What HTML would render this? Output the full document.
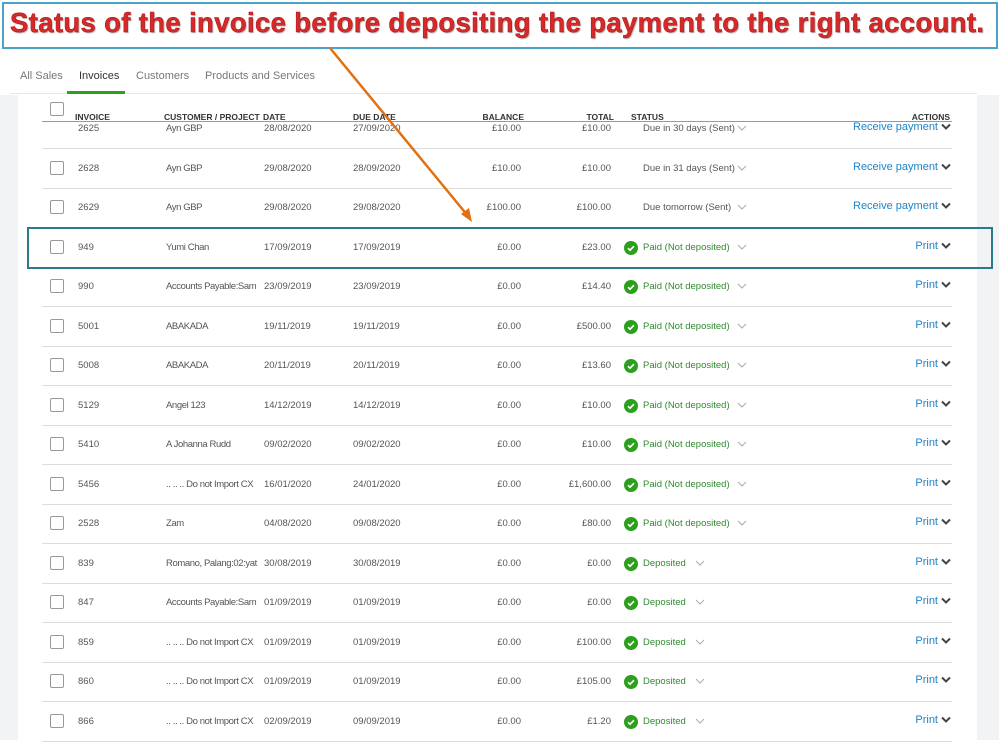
<!DOCTYPE html>
<html><head><meta charset="utf-8"><style>
*{margin:0;padding:0;box-sizing:border-box}
body{width:999px;height:749px;background:#fff;position:relative;overflow:hidden;font-family:"Liberation Sans",sans-serif;color:#555;font-size:9.5px}
.ab{position:absolute;white-space:nowrap}
.banner{left:2px;top:2px;width:996px;height:47px;border:2px solid #4aa3c4;background:#fff}
.btxt{left:10px;top:7px;font-size:27.5px;letter-spacing:0.35px;font-weight:bold;color:#d42a2a;-webkit-text-stroke:0.5px #b01010;text-shadow:0 0 2px #fff,1px 1px 1px #999}
.tab{top:70px;font-size:11px;color:#777}
.cb{position:absolute;left:50px;width:14px;height:14px;border:1px solid #999;border-radius:2px;background:#fff}
.sep{position:absolute;left:42px;width:910px;height:1px;background:#dcdcdc}
.r{text-align:right}
.chk{position:absolute;left:624px;width:14px;height:14px;border-radius:50%;background:#2ca01c}
.st{color:#2f8a2f}
.act{color:#1e84c8;font-size:11px}
.hd{font-weight:bold;color:#333;font-size:8.5px}
</style></head><body>
<div class="ab" style="left:0;top:95px;width:18px;height:645px;background:#f2f3f5"></div>
<div class="ab" style="left:977px;top:95px;width:22px;height:645px;background:#f2f3f5"></div>
<div class="ab" style="left:10px;top:93px;width:967px;height:1px;background:#e6e6e6"></div>
<div class="ab banner"></div>
<div class="ab btxt">Status of the invoice before depositing the payment to the right account.</div>
<div class="ab tab" style="left:20px">All Sales</div>
<div class="ab tab" style="left:79px;color:#333">Invoices</div>
<div class="ab tab" style="left:136px">Customers</div>
<div class="ab tab" style="left:205px">Products and Services</div>
<div class="ab" style="left:67px;top:91px;width:58px;height:3px;background:#2ca01c"></div>

<div class="cb" style="top:102px"></div>
<div class="ab hd" style="left:75px;top:112px">INVOICE</div>
<div class="ab hd" style="left:164px;top:112px">CUSTOMER / PROJECT</div>
<div class="ab hd" style="left:263px;top:112px">DATE</div>
<div class="ab hd" style="left:353px;top:112px">DUE DATE</div>
<div class="ab hd r" style="left:470px;width:54px;top:112px">BALANCE</div>
<div class="ab hd r" style="left:560px;width:54px;top:112px">TOTAL</div>
<div class="ab hd" style="left:631px;top:112px">STATUS</div>
<div class="ab hd r" style="left:880px;width:70px;top:112px">ACTIONS</div>

<div id="rows"></div>
<script>
var d=[
["2625","Ayn GBP","28/08/2020","27/09/2020","£10.00","£10.00","Due in 30 days (Sent)",0],
["2628","Ayn GBP","29/08/2020","28/09/2020","£10.00","£10.00","Due in 31 days (Sent)",0],
["2629","Ayn GBP","29/08/2020","29/08/2020","£100.00","£100.00","Due tomorrow (Sent)",0],
["949","Yumi Chan","17/09/2019","17/09/2019","£0.00","£23.00","Paid (Not deposited)",1],
["990","Accounts Payable:Sam","23/09/2019","23/09/2019","£0.00","£14.40","Paid (Not deposited)",1],
["5001","ABAKADA","19/11/2019","19/11/2019","£0.00","£500.00","Paid (Not deposited)",1],
["5008","ABAKADA","20/11/2019","20/11/2019","£0.00","£13.60","Paid (Not deposited)",1],
["5129","Angel 123","14/12/2019","14/12/2019","£0.00","£10.00","Paid (Not deposited)",1],
["5410","A Johanna Rudd","09/02/2020","09/02/2020","£0.00","£10.00","Paid (Not deposited)",1],
["5456",".. .. .. Do not Import CX","16/01/2020","24/01/2020","£0.00","£1,600.00","Paid (Not deposited)",1],
["2528","Zam","04/08/2020","09/08/2020","£0.00","£80.00","Paid (Not deposited)",1],
["839","Romano, Palang:02:yat","30/08/2019","30/08/2019","£0.00","£0.00","Deposited",1],
["847","Accounts Payable:Sam","01/09/2019","01/09/2019","£0.00","£0.00","Deposited",1],
["859",".. .. .. Do not Import CX","01/09/2019","01/09/2019","£0.00","£100.00","Deposited",1],
["860",".. .. .. Do not Import CX","01/09/2019","01/09/2019","£0.00","£105.00","Deposited",1],
["866",".. .. .. Do not Import CX","02/09/2019","09/09/2019","£0.00","£1.20","Deposited",1]];
var h="";
d.forEach(function(r,i){
 var c=Math.round(128+i*39.53),t=c-5;
 if(i>0)h+='<div class="cb" style="top:'+(c-7)+'px"></div>';
 h+='<div class="sep" style="top:'+(c+20)+'px"></div>';
 h+='<div class="ab" style="left:78px;top:'+t+'px">'+r[0]+'</div>';
 h+='<div class="ab" style="left:166px;top:'+t+'px;width:93px;overflow:hidden;letter-spacing:-0.4px">'+r[1]+'</div>';
 h+='<div class="ab" style="left:264px;top:'+t+'px">'+r[2]+'</div>';
 h+='<div class="ab" style="left:353px;top:'+t+'px">'+r[3]+'</div>';
 h+='<div class="ab r" style="left:461px;width:60px;top:'+t+'px">'+r[4]+'</div>';
 h+='<div class="ab r" style="left:551px;width:60px;top:'+t+'px">'+r[5]+'</div>';
 if(r[7])h+='<div class="chk" style="top:'+(c-6)+'px"><svg width="14" height="14"><path d="M4 7.2l2 2 4-4" stroke="#fff" stroke-width="1.6" fill="none"/></svg></div>';
 h+='<div class="ab '+(r[7]?'st':'')+'" style="left:643px;top:'+t+'px">'+r[6]+'</div>';
 var cx=r[6]=='Deposited'?695:737;
 h+='<svg class="ab" style="left:'+cx+'px;top:'+(c-3)+'px" width="10" height="7"><path d="M1 1l4 4 4-4" stroke="#aaa" stroke-width="1" fill="none"/></svg>';
 var a=i<3?'Receive payment':'Print';
 h+='<div class="ab act r" style="left:780px;width:158px;top:'+(t-2)+'px">'+a+'</div>';
 h+='<svg class="ab" style="left:941px;top:'+(c-5)+'px" width="10" height="8"><path d="M1 1.5l4 4 4-4" stroke="#444" stroke-width="2" fill="none"/></svg>';
});
document.getElementById('rows').innerHTML=h;
</script>
<div class="ab" style="left:42px;top:121px;width:910px;height:1px;background:#999"></div>
<div class="ab" style="left:27px;top:227px;width:966px;height:42px;border:2px solid #2a7a8c"></div>
<svg class="ab" style="left:0;top:0" width="999" height="749"><line x1="330" y1="48" x2="468" y2="216" stroke="#e07010" stroke-width="2.5"/><path d="M472 222 L461 214 L469 208 Z" fill="#e07010"/></svg>
</body></html>
